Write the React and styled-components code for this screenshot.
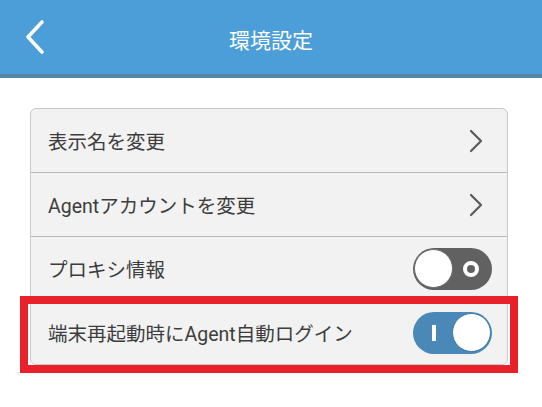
import React from "react";
import styled, { createGlobalStyle } from "styled-components";

const Global = createGlobalStyle`
  html, body { margin: 0; padding: 0; background: #ffffff; }
  body { font-family: Roboto, "Noto Sans CJK JP", sans-serif; }
`;

const Page = styled.div`
  width: 542px;
  height: 407px;
  background: #ffffff;
  overflow: hidden;
`;

const Header = styled.header`
  height: 74px;
  background: #4c9ed9;
  border-bottom: 4px solid #5387a9;
  display: grid;
  grid-template-columns: 60px 1fr 60px;
  align-items: center;
`;

const BackButton = styled.button`
  background: none;
  border: none;
  padding: 0 0 0 25px;
  height: 100%;
  display: flex;
  align-items: center;
  cursor: pointer;
`;

const Title = styled.h1`
  margin: 0;
  padding-top: 3px;
  text-align: center;
  color: #ffffff;
  font-family: "Noto Sans CJK JP", sans-serif;
  font-weight: 400;
  font-size: 21px;
`;

const Card = styled.div`
  margin: 30px 34px 0 30px;
  background: #f2f2f2;
  border: 1px solid #c9c9c9;
  border-radius: 6px;
  display: flex;
  flex-direction: column;
`;

const Row = styled.div`
  position: relative;
  height: 63px;
  display: flex;
  align-items: center;
  justify-content: space-between;
  padding: 0 15px 0 17px;
  & + & { border-top: 1px solid #b9b9b9; }
  ${(p) =>
    p.$highlight &&
    `
    &::after {
      content: "";
      position: absolute;
      left: -11px;
      right: -11px;
      top: -5px;
      bottom: -9px;
      border: 8px solid #e8212b;
      pointer-events: none;
    }
  `}
`;

const Label = styled.span`
  font-size: 19.5px;
  color: #3d3d3d;
  font-family: Roboto, "Noto Sans CJK JP", sans-serif;
`;

const Chevron = styled.svg`
  width: 14px;
  height: 24px;
  margin-right: 9px;
`;

const Track = styled.div`
  width: 79px;
  height: 42px;
  border-radius: 21px;
  background: ${(p) => (p.$on ? "#4a88b8" : "#616161")};
  display: flex;
  align-items: center;
  flex-direction: ${(p) => (p.$on ? "row-reverse" : "row")};
  box-sizing: border-box;
  padding: 0 1px;
`;

const Knob = styled.div`
  width: 39px;
  height: 39px;
  border-radius: 50%;
  background: #ffffff;
  box-sizing: border-box;
  border: 1.5px solid ${(p) => (p.$on ? "#3f77a3" : "#6b6b6b")};
`;

const Mark = styled.div`
  flex: 1;
  display: flex;
  align-items: center;
  justify-content: center;
`;

const OffRing = styled.div`
  width: 16px;
  height: 16px;
  border-radius: 50%;
  box-sizing: border-box;
  border: 4px solid #ffffff;
  margin-left: -2px;
`;

const OnBar = styled.div`
  width: 4px;
  height: 16px;
  background: #ffffff;
  margin-left: 2px;
`;

const Toggle = ({ on }) => (
  <Track $on={on}>
    <Knob $on={on} />
    <Mark>{on ? <OnBar /> : <OffRing />}</Mark>
  </Track>
);

const Arrow = () => (
  <Chevron viewBox="0 0 14 24">
    <polyline
      points="2,2 12,12 2,22"
      fill="none"
      stroke="#5a5a5a"
      strokeWidth="2.2"
      strokeLinecap="round"
      strokeLinejoin="round"
    />
  </Chevron>
);

export default function App() {
  return (
    <Page>
      <Global />
      <Header>
        <BackButton aria-label="back">
          <svg width="20" height="36" viewBox="0 0 20 36">
            <polyline
              points="17,3 3,18 17,33"
              fill="none"
              stroke="#ffffff"
              strokeWidth="3.6"
              strokeLinecap="round"
              strokeLinejoin="round"
            />
          </svg>
        </BackButton>
        <Title>環境設定</Title>
        <div />
      </Header>
      <Card>
        <Row>
          <Label>表示名を変更</Label>
          <Arrow />
        </Row>
        <Row>
          <Label>Agentアカウントを変更</Label>
          <Arrow />
        </Row>
        <Row>
          <Label>プロキシ情報</Label>
          <Toggle on={false} />
        </Row>
        <Row $highlight>
          <Label>端末再起動時にAgent自動ログイン</Label>
          <Toggle on={true} />
        </Row>
      </Card>
    </Page>
  );
}
